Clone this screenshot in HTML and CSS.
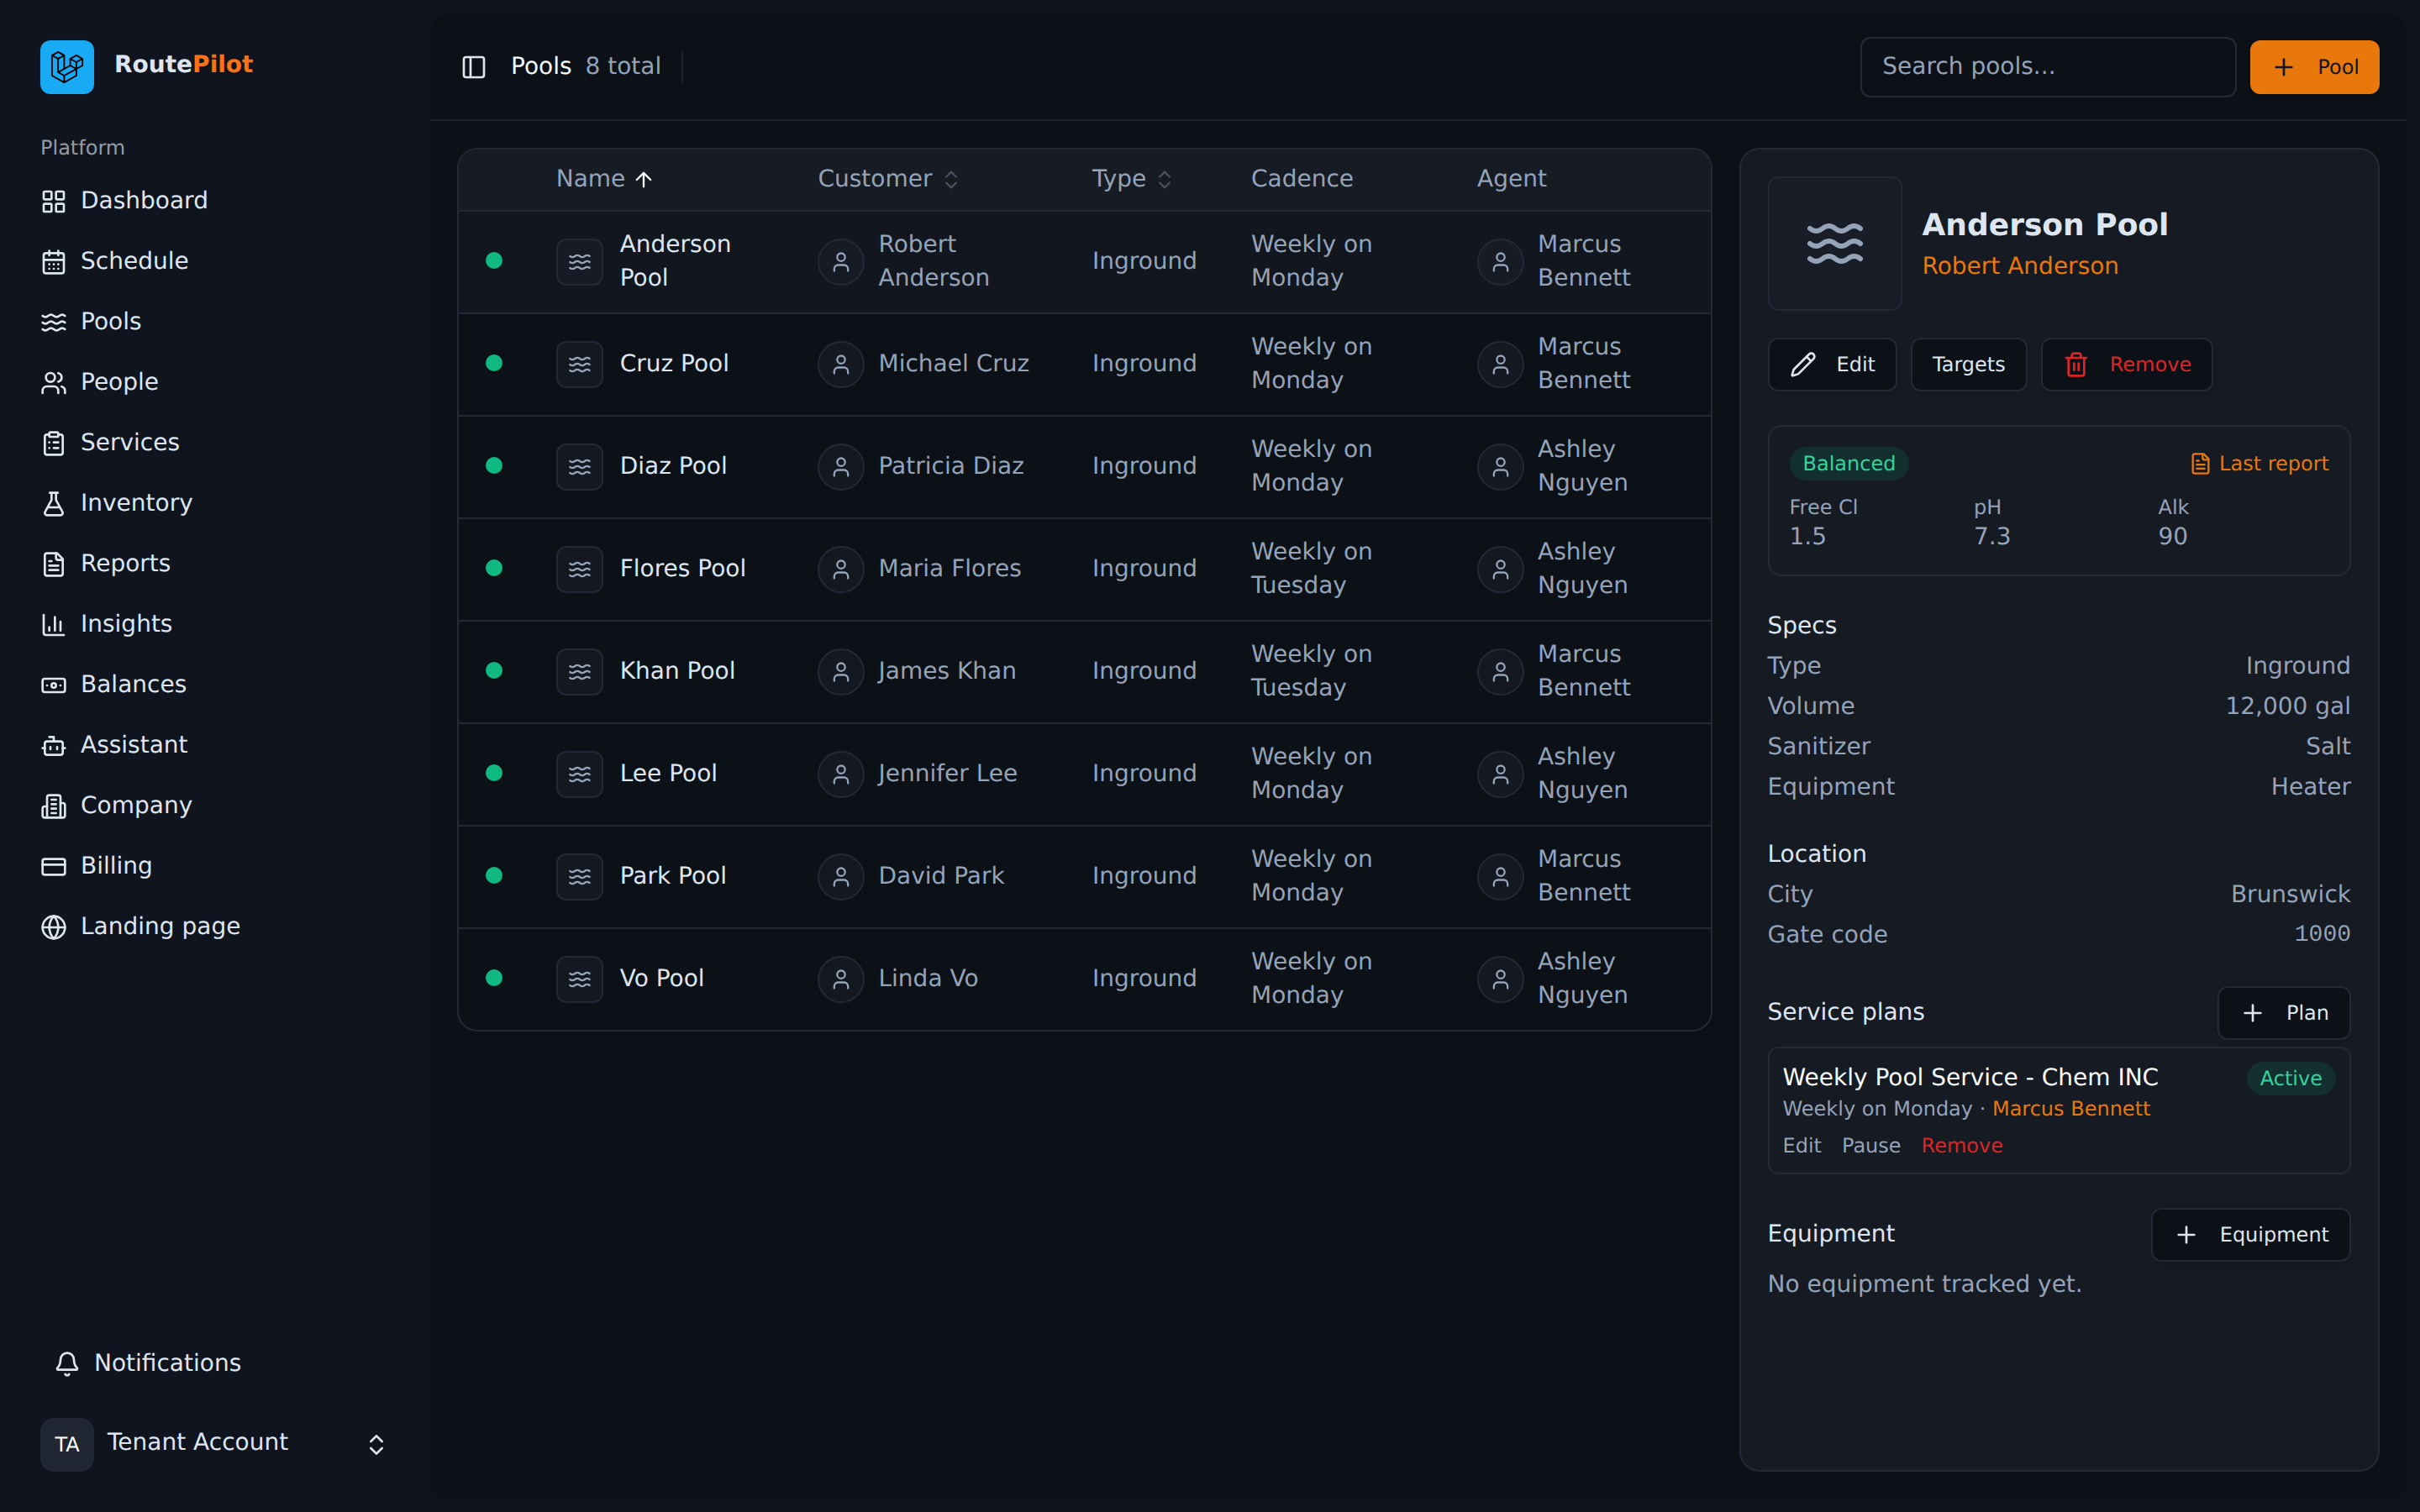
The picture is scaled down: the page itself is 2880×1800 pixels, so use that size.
FILE: index.html
```html
<!DOCTYPE html>
<html lang="en">
<head>
<meta charset="utf-8">
<title>Pools - RoutePilot</title>
<link rel="stylesheet" href="styles.css">
</head>
<body>
<svg class="sprite" aria-hidden="true">
  <symbol id="grid" viewBox="0 0 24 24"><rect width="7" height="7" x="3" y="3" rx="1"/><rect width="7" height="7" x="14" y="3" rx="1"/><rect width="7" height="7" x="14" y="14" rx="1"/><rect width="7" height="7" x="3" y="14" rx="1"/></symbol>
  <symbol id="calendar" viewBox="0 0 24 24"><path d="M8 2v4M16 2v4"/><rect width="18" height="18" x="3" y="4" rx="2"/><path d="M3 10h18M8 14h.01M12 14h.01M16 14h.01M8 18h.01M12 18h.01M16 18h.01"/></symbol>
  <symbol id="waves" viewBox="0 0 24 24"><path d="M2 6c.6.5 1.2 1 2.5 1C7 7 7 5 9.5 5c2.6 0 2.4 2 5 2 2.5 0 2.5-2 5-2 1.3 0 1.9.5 2.5 1"/><path d="M2 12c.6.5 1.2 1 2.5 1 2.5 0 2.5-2 5-2 2.6 0 2.4 2 5 2 2.5 0 2.5-2 5-2 1.3 0 1.9.5 2.5 1"/><path d="M2 18c.6.5 1.2 1 2.5 1 2.5 0 2.5-2 5-2 2.6 0 2.4 2 5 2 2.5 0 2.5-2 5-2 1.3 0 1.9.5 2.5 1"/></symbol>
  <symbol id="users" viewBox="0 0 24 24"><path d="M16 21v-2a4 4 0 0 0-4-4H6a4 4 0 0 0-4 4v2"/><circle cx="9" cy="7" r="4"/><path d="M22 21v-2a4 4 0 0 0-3-3.87M16 3.13a4 4 0 0 1 0 7.75"/></symbol>
  <symbol id="clipboard" viewBox="0 0 24 24"><rect width="8" height="4" x="8" y="2" rx="1"/><path d="M16 4h2a2 2 0 0 1 2 2v14a2 2 0 0 1-2 2H6a2 2 0 0 1-2-2V6a2 2 0 0 1 2-2h2M12 11h4M12 16h4M8 11h.01M8 16h.01"/></symbol>
  <symbol id="flask" viewBox="0 0 24 24"><path d="M14 2v6a2 2 0 0 0 .245.96l5.51 10.08A2 2 0 0 1 18 22H6a2 2 0 0 1-1.755-2.96l5.51-10.08A2 2 0 0 0 10 8V2M6.453 15h11.094M8.5 2h7"/></symbol>
  <symbol id="file" viewBox="0 0 24 24"><path d="M15 2H6a2 2 0 0 0-2 2v16a2 2 0 0 0 2 2h12a2 2 0 0 0 2-2V7Z"/><path d="M14 2v4a2 2 0 0 0 2 2h4M10 9H8M16 13H8M16 17H8"/></symbol>
  <symbol id="chart" viewBox="0 0 24 24"><path d="M3 3v16a2 2 0 0 0 2 2h16M18 17V9M13 17V5M8 17v-3"/></symbol>
  <symbol id="banknote" viewBox="0 0 24 24"><rect width="20" height="12" x="2" y="6" rx="2"/><circle cx="12" cy="12" r="2"/><path d="M6 12h.01M18 12h.01"/></symbol>
  <symbol id="bot" viewBox="0 0 24 24"><path d="M12 8V4H8"/><rect width="16" height="12" x="4" y="8" rx="2"/><path d="M2 14h2M20 14h2M15 13v2M9 13v2"/></symbol>
  <symbol id="building" viewBox="0 0 24 24"><path d="M6 22V4a2 2 0 0 1 2-2h8a2 2 0 0 1 2 2v18Z"/><path d="M6 12H4a2 2 0 0 0-2 2v6a2 2 0 0 0 2 2h2M18 9h2a2 2 0 0 1 2 2v9a2 2 0 0 1-2 2h-2M10 6h4M10 10h4M10 14h4M10 18h4"/></symbol>
  <symbol id="card" viewBox="0 0 24 24"><rect width="20" height="14" x="2" y="5" rx="2"/><path d="M2 10h20"/></symbol>
  <symbol id="globe" viewBox="0 0 24 24"><circle cx="12" cy="12" r="10"/><path d="M12 2a14.5 14.5 0 0 0 0 20 14.5 14.5 0 0 0 0-20M2 12h20"/></symbol>
  <symbol id="bell" viewBox="0 0 24 24"><path d="M10.268 21a2 2 0 0 0 3.464 0M3.262 15.326A1 1 0 0 0 4 17h16a1 1 0 0 0 .74-1.673C19.41 13.956 18 12.499 18 8A6 6 0 0 0 6 8c0 4.499-1.411 5.956-2.738 7.326"/></symbol>
  <symbol id="updown" viewBox="0 0 24 24"><path d="m7 15 5 5 5-5M7 9l5-5 5 5"/></symbol>
  <symbol id="panel" viewBox="0 0 24 24"><rect width="18" height="18" x="3" y="3" rx="2"/><path d="M9 3v18"/></symbol>
  <symbol id="up" viewBox="0 0 24 24"><path d="m5 12 7-7 7 7M12 19V5"/></symbol>
  <symbol id="user" viewBox="0 0 24 24"><path d="M19 21v-2a4 4 0 0 0-4-4H9a4 4 0 0 0-4 4v2"/><circle cx="12" cy="7" r="4"/></symbol>
  <symbol id="plus" viewBox="0 0 24 24"><path d="M5 12h14M12 5v14"/></symbol>
  <symbol id="pencil" viewBox="0 0 24 24"><path d="M21.174 6.812a1 1 0 0 0-3.986-3.987L3.842 16.174a2 2 0 0 0-.5.83l-1.321 4.352a.5.5 0 0 0 .623.622l4.353-1.32a2 2 0 0 0 .83-.497zM15 5l4 4"/></symbol>
  <symbol id="trash" viewBox="0 0 24 24"><path d="M3 6h18M19 6v14a2 2 0 0 1-2 2H7a2 2 0 0 1-2-2V6M8 6V4a2 2 0 0 1 2-2h4a2 2 0 0 1 2 2v2M10 11v6M14 11v6"/></symbol>
</svg>

<div class="app">
  <aside class="sidebar">
    <div class="brand">
      <span class="brand-mark"><svg viewBox="0 0 40 42"><path fill-rule="evenodd" clip-rule="evenodd" d="M17.2 5.633 8.6.855 0 5.633v26.51l16.2 9 16.2-9v-8.442l7.6-4.223V9.856l-8.6-4.777-8.6 4.777V18.3l-5.6 3.111V5.633ZM38 18.301l-5.6 3.11v-6.157l5.6-3.11V18.3Zm-1.06-7.856-5.54 3.078-5.54-3.079 5.54-3.078 5.54 3.079ZM24.8 18.3v-6.157l5.6 3.111v6.158L24.8 18.3Zm-1 1.732 5.54 3.078-13.14 7.302-5.54-3.078 13.14-7.3v-.002Zm-16.2 7.89 7.6 4.222V38.3L2 30.966V7.92l5.6 3.111v16.892ZM8.6 9.3 3.06 6.222 8.6 3.143l5.54 3.08L8.6 9.3Zm21.8 15.51-13.2 7.334V38.3l13.2-7.334v-6.156ZM9.6 11.034l5.6-3.11v14.6l-5.6 3.11v-14.6Z"/></svg></span>
      <span class="brand-name">Route<b>Pilot</b></span>
    </div>
    <div class="group-label"><span>Platform</span></div>
    <nav class="nav">
      <a><svg class="icon"><use href="#grid"/></svg><span class="t">Dashboard</span></a>
      <a><svg class="icon"><use href="#calendar"/></svg><span class="t">Schedule</span></a>
      <a><svg class="icon"><use href="#waves"/></svg><span class="t">Pools</span></a>
      <a><svg class="icon"><use href="#users"/></svg><span class="t">People</span></a>
      <a><svg class="icon"><use href="#clipboard"/></svg><span class="t">Services</span></a>
      <a><svg class="icon"><use href="#flask"/></svg><span class="t">Inventory</span></a>
      <a><svg class="icon"><use href="#file"/></svg><span class="t">Reports</span></a>
      <a><svg class="icon"><use href="#chart"/></svg><span class="t">Insights</span></a>
      <a><svg class="icon"><use href="#banknote"/></svg><span class="t">Balances</span></a>
      <a><svg class="icon"><use href="#bot"/></svg><span class="t">Assistant</span></a>
      <a><svg class="icon"><use href="#building"/></svg><span class="t">Company</span></a>
      <a><svg class="icon"><use href="#card"/></svg><span class="t">Billing</span></a>
      <a><svg class="icon"><use href="#globe"/></svg><span class="t">Landing page</span></a>
    </nav>
    <a class="notifications"><svg class="icon"><use href="#bell"/></svg><span class="t">Notifications</span></a>
    <div class="account">
      <span class="initials">TA</span>
      <span class="account-name">Tenant Account</span>
      <svg class="icon"><use href="#updown"/></svg>
    </div>
  </aside>

  <main class="panel">
    <header class="topbar">
      <svg class="icon"><use href="#panel"/></svg>
      <h1 class="t">Pools</h1>
      <span class="count t">8 total</span>
      <span class="divider"></span>
      <div class="search"><span class="t">Search pools...</span></div>
      <button class="btn primary"><svg class="icon"><use href="#plus"/></svg><span>Pool</span></button>
    </header>

    <div class="content">
      <section class="list">
        <table>
          <colgroup><col class="c-dot"><col class="c-name"><col class="c-customer"><col class="c-type"><col class="c-cadence"><col class="c-agent"></colgroup>
          <thead>
            <tr><th></th>
              <th><div class="cell"><span class="t">Name</span><svg class="icon sm sorted"><use href="#up"/></svg></div></th>
              <th><div class="cell"><span class="t">Customer</span><svg class="icon sm sort"><use href="#updown"/></svg></div></th>
              <th><div class="cell"><span class="t">Type</span><svg class="icon sm sort"><use href="#updown"/></svg></div></th>
              <th><div class="cell"><span class="t">Cadence</span></div></th>
              <th><div class="cell"><span class="t">Agent</span></div></th></tr>
          </thead>
          <tbody>
            <tr class="selected"><td><span class="dot"></span></td>
              <td><div class="pool"><span class="thumb"><svg class="icon sm"><use href="#waves"/></svg></span><span class="t">Anderson Pool</span></div></td>
              <td><div class="person"><span class="thumb"><svg class="icon sm"><use href="#user"/></svg></span><span class="t">Robert Anderson</span></div></td>
              <td><span class="t">Inground</span></td><td><span class="t">Weekly on Monday</span></td>
              <td><div class="person"><span class="thumb"><svg class="icon sm"><use href="#user"/></svg></span><span class="t">Marcus Bennett</span></div></td></tr>
            <tr><td><span class="dot"></span></td>
              <td><div class="pool"><span class="thumb"><svg class="icon sm"><use href="#waves"/></svg></span><span class="t">Cruz Pool</span></div></td>
              <td><div class="person"><span class="thumb"><svg class="icon sm"><use href="#user"/></svg></span><span class="t">Michael Cruz</span></div></td>
              <td><span class="t">Inground</span></td><td><span class="t">Weekly on Monday</span></td>
              <td><div class="person"><span class="thumb"><svg class="icon sm"><use href="#user"/></svg></span><span class="t">Marcus Bennett</span></div></td></tr>
            <tr><td><span class="dot"></span></td>
              <td><div class="pool"><span class="thumb"><svg class="icon sm"><use href="#waves"/></svg></span><span class="t">Diaz Pool</span></div></td>
              <td><div class="person"><span class="thumb"><svg class="icon sm"><use href="#user"/></svg></span><span class="t">Patricia Diaz</span></div></td>
              <td><span class="t">Inground</span></td><td><span class="t">Weekly on Monday</span></td>
              <td><div class="person"><span class="thumb"><svg class="icon sm"><use href="#user"/></svg></span><span class="t">Ashley Nguyen</span></div></td></tr>
            <tr><td><span class="dot"></span></td>
              <td><div class="pool"><span class="thumb"><svg class="icon sm"><use href="#waves"/></svg></span><span class="t">Flores Pool</span></div></td>
              <td><div class="person"><span class="thumb"><svg class="icon sm"><use href="#user"/></svg></span><span class="t">Maria Flores</span></div></td>
              <td><span class="t">Inground</span></td><td><span class="t">Weekly on Tuesday</span></td>
              <td><div class="person"><span class="thumb"><svg class="icon sm"><use href="#user"/></svg></span><span class="t">Ashley Nguyen</span></div></td></tr>
            <tr><td><span class="dot"></span></td>
              <td><div class="pool"><span class="thumb"><svg class="icon sm"><use href="#waves"/></svg></span><span class="t">Khan Pool</span></div></td>
              <td><div class="person"><span class="thumb"><svg class="icon sm"><use href="#user"/></svg></span><span class="t">James Khan</span></div></td>
              <td><span class="t">Inground</span></td><td><span class="t">Weekly on Tuesday</span></td>
              <td><div class="person"><span class="thumb"><svg class="icon sm"><use href="#user"/></svg></span><span class="t">Marcus Bennett</span></div></td></tr>
            <tr><td><span class="dot"></span></td>
              <td><div class="pool"><span class="thumb"><svg class="icon sm"><use href="#waves"/></svg></span><span class="t">Lee Pool</span></div></td>
              <td><div class="person"><span class="thumb"><svg class="icon sm"><use href="#user"/></svg></span><span class="t">Jennifer Lee</span></div></td>
              <td><span class="t">Inground</span></td><td><span class="t">Weekly on Monday</span></td>
              <td><div class="person"><span class="thumb"><svg class="icon sm"><use href="#user"/></svg></span><span class="t">Ashley Nguyen</span></div></td></tr>
            <tr><td><span class="dot"></span></td>
              <td><div class="pool"><span class="thumb"><svg class="icon sm"><use href="#waves"/></svg></span><span class="t">Park Pool</span></div></td>
              <td><div class="person"><span class="thumb"><svg class="icon sm"><use href="#user"/></svg></span><span class="t">David Park</span></div></td>
              <td><span class="t">Inground</span></td><td><span class="t">Weekly on Monday</span></td>
              <td><div class="person"><span class="thumb"><svg class="icon sm"><use href="#user"/></svg></span><span class="t">Marcus Bennett</span></div></td></tr>
            <tr><td><span class="dot"></span></td>
              <td><div class="pool"><span class="thumb"><svg class="icon sm"><use href="#waves"/></svg></span><span class="t">Vo Pool</span></div></td>
              <td><div class="person"><span class="thumb"><svg class="icon sm"><use href="#user"/></svg></span><span class="t">Linda Vo</span></div></td>
              <td><span class="t">Inground</span></td><td><span class="t">Weekly on Monday</span></td>
              <td><div class="person"><span class="thumb"><svg class="icon sm"><use href="#user"/></svg></span><span class="t">Ashley Nguyen</span></div></td></tr>
          </tbody>
        </table>
      </section>

      <aside class="detail">
        <div class="hero">
          <span class="hero-icon"><svg class="icon lg"><use href="#waves"/></svg></span>
          <div><h2>Anderson Pool</h2><a class="link t">Robert Anderson</a></div>
        </div>
        <div class="actions">
          <button class="btn"><svg class="icon"><use href="#pencil"/></svg><span>Edit</span></button>
          <button class="btn"><span>Targets</span></button>
          <button class="btn danger"><svg class="icon"><use href="#trash"/></svg><span>Remove</span></button>
        </div>
        <div class="chemistry">
          <div class="chem-head">
            <span class="badge">Balanced</span>
            <a class="report"><svg class="icon sm"><use href="#file"/></svg><span>Last report</span></a>
          </div>
          <div class="readings">
            <div><small>Free Cl</small><span class="t">1.5</span></div>
            <div><small>pH</small><span class="t">7.3</span></div>
            <div><small>Alk</small><span class="t">90</span></div>
          </div>
        </div>
        <section class="facts">
          <h3 class="t">Specs</h3>
          <div class="fact"><span class="t">Type</span><span class="t">Inground</span></div>
          <div class="fact"><span class="t">Volume</span><span class="t">12,000 gal</span></div>
          <div class="fact"><span class="t">Sanitizer</span><span class="t">Salt</span></div>
          <div class="fact"><span class="t">Equipment</span><span class="t">Heater</span></div>
        </section>
        <section class="facts">
          <h3 class="t">Location</h3>
          <div class="fact"><span class="t">City</span><span class="t">Brunswick</span></div>
          <div class="fact"><span class="t">Gate code</span><span class="mono">1000</span></div>
        </section>
        <section class="facts">
          <div class="facts-head"><h3 class="t">Service plans</h3><button class="btn"><svg class="icon"><use href="#plus"/></svg><span>Plan</span></button></div>
          <div class="plan">
            <div class="plan-head">
              <div><div class="plan-name t">Weekly Pool Service - Chem INC</div><div class="plan-sub">Weekly on Monday · <a class="link">Marcus Bennett</a></div></div>
              <span class="badge">Active</span>
            </div>
            <div class="plan-links"><a>Edit</a><a>Pause</a><a class="remove">Remove</a></div>
          </div>
        </section>
        <section class="facts">
          <div class="facts-head"><h3 class="t">Equipment</h3><button class="btn"><svg class="icon"><use href="#plus"/></svg><span>Equipment</span></button></div>
          <p class="t">No equipment tracked yet.</p>
        </section>
      </aside>
    </div>
  </main>
</div>
</body>
</html>
```
FILE: styles.css
```css
:root {
  --sidebar: #10141e;
  --panel: #0c1017;
  --card: #161a23;
  --border: #232936;
  --line: #1b202b;
  --text: #dde6f0;
  --strong: #f8fafc;
  --muted: #94a3b8;
  --accent: #e8780c;
  --danger: #dc2626;
}
* { box-sizing: border-box; margin: 0; padding: 0; }
body {
  width: 2880px;
  height: 1800px;
  overflow: hidden;
  background: var(--sidebar);
  color: var(--text);
  font: 28px/40px "DejaVu Sans", sans-serif;
  text-rendering: geometricPrecision;
}
h1, h2, h3, th { font-size: 28px; font-weight: 400; text-align: left; }
/* Body-size labels sit a hair above the middle of their row */
.t { margin-top: -1px; margin-bottom: 1px; }
.sprite { position: absolute; width: 0; height: 0; }
.icon {
  flex: none;
  display: block;
  width: 32px;
  height: 32px;
  fill: none;
  stroke: currentColor;
  stroke-width: 2;
  stroke-linecap: round;
  stroke-linejoin: round;
}
.icon.sm { width: 28px; height: 28px; }
.icon.lg { width: 72px; height: 72px; }

.app { display: flex; height: 1800px; }

/* Sidebar */
.sidebar {
  width: 512px;
  flex: none;
  display: flex;
  flex-direction: column;
  padding: 48px;
}
.brand { display: flex; align-items: center; gap: 24px; height: 64px; margin-bottom: 32px; }
.brand-mark {
  display: grid;
  place-items: center;
  width: 64px;
  height: 64px;
  border-radius: 12px;
  background: #18aaf4;
}
.brand-mark svg { width: 40px; height: 40px; fill: #000; }
.brand-name { font-weight: 700; line-height: 35px; margin-bottom: 7px; }
.brand-name b { color: #f97316; }
.group-label { display: flex; align-items: center; height: 64px; font-size: 24px; color: #959ba3; }
.nav { display: flex; flex-direction: column; gap: 8px; }
.nav a { display: flex; align-items: center; gap: 16px; height: 64px; }
.notifications { display: flex; align-items: center; gap: 16px; height: 64px; padding-left: 16px; margin-top: auto; }
.account { display: flex; align-items: center; gap: 16px; height: 64px; margin-top: 32px; }
.initials {
  display: grid;
  place-items: center;
  width: 64px;
  height: 64px;
  border-radius: 16px;
  background: #202733;
  color: #fff;
  font-size: 24px;
}
.account-name { flex: 1; line-height: 35px; margin-bottom: 7px; }

/* Main panel */
.panel {
  flex: 1;
  min-width: 0;
  display: flex;
  flex-direction: column;
  margin: 16px 16px 16px 0;
  border-radius: 24px;
  background: var(--panel);
  box-shadow: 0 2px 6px rgba(0, 0, 0, .1), 0 2px 4px -2px rgba(0, 0, 0, .1);
}
.topbar {
  display: flex;
  align-items: center;
  height: 128px;
  flex: none;
  padding: 2px 32px 0 36px;
  border-bottom: 2px solid var(--line);
}
.topbar h1 { margin-left: 28px; color: var(--strong); }
.count { margin-left: 16px; color: var(--muted); }
.divider { width: 2px; height: 40px; margin-left: 24px; background: var(--line); }
.search {
  display: flex;
  align-items: center;
  width: 448px;
  height: 72px;
  margin: 0 16px 0 auto;
  padding: 0 24px;
  border: 2px solid var(--border);
  border-radius: 12px;
  color: var(--muted);
}
.btn {
  display: flex;
  align-items: center;
  gap: 24px;
  height: 64px;
  padding: 0 24px;
  border: 2px solid var(--border);
  border-radius: 12px;
  background: var(--panel);
  box-shadow: 0 2px 4px rgba(0, 0, 0, .1);
  color: var(--text);
  font: 24px/32px "DejaVu Sans", sans-serif;
  text-rendering: geometricPrecision;
}
.btn.primary { border: 0; background: var(--accent); color: #10141e; }
.btn.danger { color: var(--danger); }

.content {
  flex: 1;
  min-height: 0;
  display: grid;
  grid-template-columns: minmax(0, 1fr) 762.5px;
  gap: 32px;
  align-items: start;
  padding: 32px;
}

/* Pool table */
.list { border: 2px solid var(--border); border-radius: 24px; overflow: hidden; }
table { width: 100%; table-layout: fixed; border-collapse: separate; border-spacing: 0; color: var(--muted); }
.c-dot { width: 83.7px; }
.c-name { width: 311.8px; }
.c-customer { width: 326.5px; }
.c-type { width: 189px; }
.c-cadence { width: 269px; }
th { height: 74px; padding: 0 32px; background: #171b24; border-bottom: 2px solid var(--border); }
td { height: 122px; padding: 0 32px; border-bottom: 2px solid var(--border); vertical-align: middle; }
tbody tr:last-child td { height: 120px; border-bottom: 0; }
.selected td { background: #12161e; }
.cell { display: flex; align-items: center; gap: 8px; }
.sorted { color: var(--strong); }
.sort { opacity: .4; }
.dot { display: block; width: 20px; height: 20px; margin-top: -4px; border-radius: 50%; background: #10b981; }
td > .t { display: block; }
.pool, .person { display: flex; align-items: center; }
.pool { gap: 20px; color: var(--text); }
.person { gap: 16px; }
.thumb {
  flex: none;
  display: grid;
  place-items: center;
  width: 56px;
  height: 56px;
  border: 2px solid var(--border);
  border-radius: 12px;
  background: #141820;
  color: var(--muted);
}
.selected .thumb { background: #171b26; }
.person .thumb { border-radius: 50%; }

/* Detail card */
.detail {
  height: 1576px;
  padding: 32px;
  border: 2px solid var(--border);
  border-radius: 24px;
  background: var(--card);
}
.hero { display: flex; align-items: center; gap: 24px; }
.hero-icon {
  display: grid;
  place-items: center;
  width: 160px;
  height: 160px;
  border: 2px solid var(--border);
  border-radius: 12px;
  background: #191d27;
  color: var(--muted);
}
.hero h2 { margin: -1px 0 1px; font-size: 36px; line-height: 56px; font-weight: 700; }
.hero .link { display: block; }
.link { color: var(--accent); }
.actions { display: flex; gap: 16px; margin-top: 32px; }
.chemistry { height: 180px; margin-top: 40px; padding: 24px; border: 2px solid var(--border); border-radius: 16px; color: var(--muted); }
.chem-head { display: flex; align-items: center; justify-content: space-between; }
.badge {
  flex: none;
  display: flex;
  align-items: center;
  height: 40px;
  padding: 0 16px;
  border-radius: 20px;
  background: #142f30;
  color: #34d399;
  font-size: 24px;
}
.report { display: flex; align-items: center; gap: 8px; color: var(--accent); font-size: 24px; }
.readings { display: grid; grid-template-columns: repeat(3, 1fr); gap: 16px; margin-top: 16px; }
.readings small { display: block; font-size: 24px; line-height: 32px; }
.readings span { display: block; }
.facts { display: flex; flex-direction: column; gap: 8px; margin-top: 40px; color: var(--muted); }
.facts h3 { color: var(--text); }
.fact, .facts-head { display: flex; align-items: center; justify-content: space-between; }
.mono { font-family: "Liberation Mono", monospace; }
.plan { height: 152px; padding: 16px; border: 2px solid var(--border); border-radius: 12px; }
.plan-head { display: flex; align-items: flex-start; justify-content: space-between; }
.plan-name { color: var(--strong); }
.plan-sub { font-size: 24px; line-height: 32px; }
.plan-links { display: flex; gap: 24px; margin-top: 12px; font-size: 24px; line-height: 32px; }
.remove { color: var(--danger); }
```
